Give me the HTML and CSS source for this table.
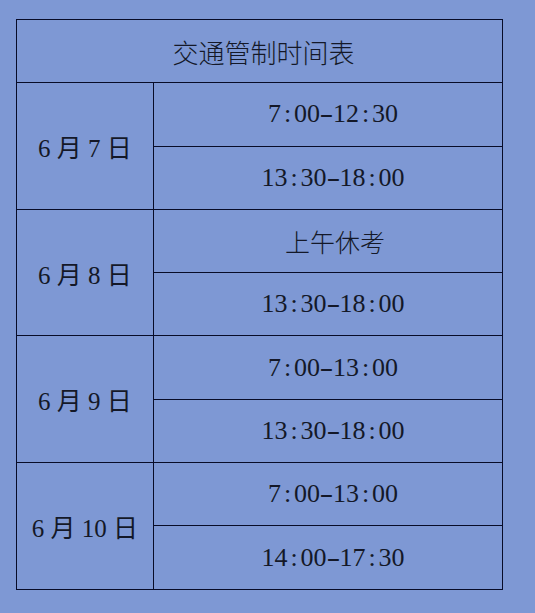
FILE: index.html
```html
<!DOCTYPE html>
<html lang="zh">
<head>
<meta charset="utf-8">
<link rel="stylesheet" href="styles.css">
</head>
<body>
<table class="schedule">
  <colgroup><col class="col-date"><col class="col-time"></colgroup>
  <tr><td class="title" colspan="2">交通管制时间表</td></tr>
  <tr><td class="date" rowspan="2">6 月 7 日</td><td class="time">7<span class="p">:</span>00<span class="p d">-</span>12<span class="p">:</span>30</td></tr>
  <tr><td class="time">13<span class="p">:</span>30<span class="p d">-</span>18<span class="p">:</span>00</td></tr>
  <tr><td class="date" rowspan="2">6 月 8 日</td><td class="time cjk">上午休考</td></tr>
  <tr><td class="time">13<span class="p">:</span>30<span class="p d">-</span>18<span class="p">:</span>00</td></tr>
  <tr><td class="date" rowspan="2">6 月 9 日</td><td class="time">7<span class="p">:</span>00<span class="p d">-</span>13<span class="p">:</span>00</td></tr>
  <tr><td class="time">13<span class="p">:</span>30<span class="p d">-</span>18<span class="p">:</span>00</td></tr>
  <tr><td class="date" rowspan="2">6 月 10 日</td><td class="time">7<span class="p">:</span>00<span class="p d">-</span>13<span class="p">:</span>00</td></tr>
  <tr><td class="time">14<span class="p">:</span>00<span class="p d">-</span>17<span class="p">:</span>30</td></tr>
</table>
</body>
</html>
```
FILE: styles.css
```css
html, body {
  margin: 0;
  padding: 0;
  background: #7e98d4;
}
body {
  padding: 19px 0 0 16px;
  color: #141828;
  font-family: "Liberation Serif", "Noto Sans CJK SC", serif;
}
.schedule {
  border-collapse: collapse;
  width: 487px;
  table-layout: fixed;
}
.col-date {
  width: 137px;
}
.schedule td {
  border: 1px solid #080c28;
  height: 62px;
  padding: 0;
  text-align: center;
  vertical-align: middle;
}
.schedule tr {
  height: 63.3px;
}
.title {
  font-family: "Noto Sans CJK SC", sans-serif;
  font-size: 26px;
  font-weight: 300;
  padding-left: 8px !important;
}
.date {
  font-size: 25px;
  font-family: "Liberation Serif", "Noto Sans CJK SC", serif;
}
.time {
  font-size: 26px;
  padding-left: 10px !important;
}
.time .p {
  display: inline-block;
  width: 0.5em;
  text-align: center;
}
.time .d {
  transform: scaleX(1.6);
}
.time.cjk {
  font-family: "Noto Sans CJK SC", sans-serif;
  font-weight: 300;
  font-size: 25px;
  padding-left: 14px !important;
}
```
